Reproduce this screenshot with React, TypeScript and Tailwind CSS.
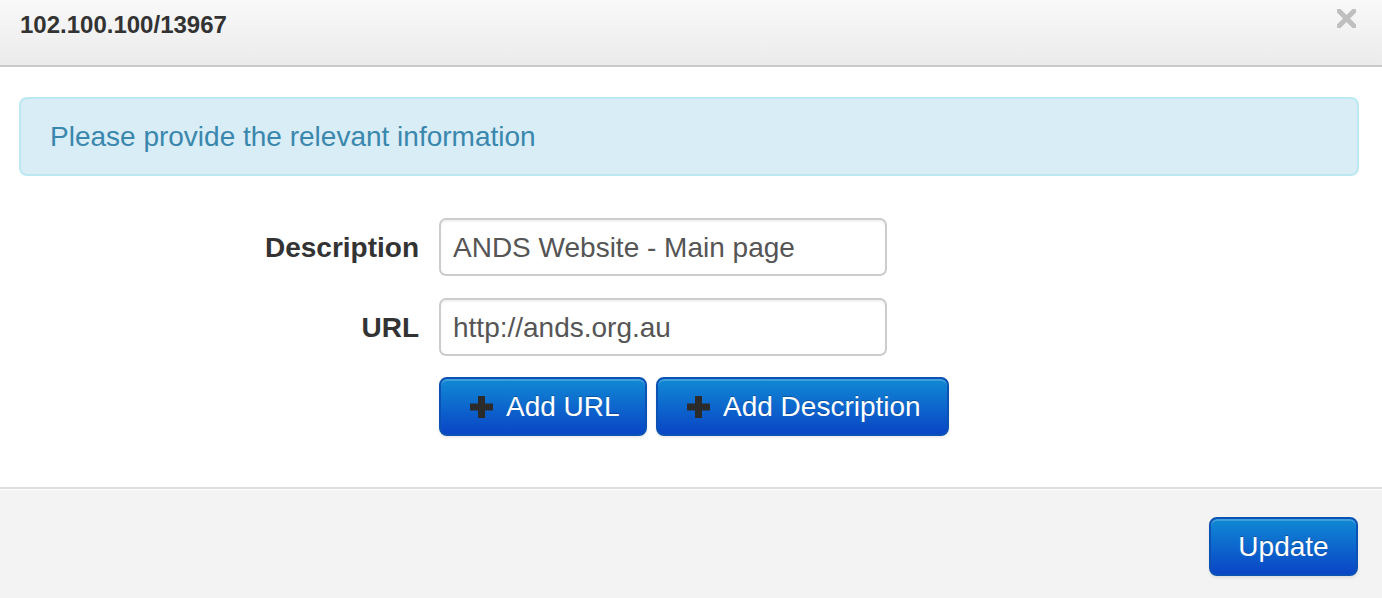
import React from "react";

function PlusIcon() {
  return (
    <svg width="23" height="22" viewBox="0 0 23 22" className="shrink-0">
      <rect x="0" y="7.5" width="23" height="7" fill="#2b2b2b" />
      <rect x="8" y="0" width="7" height="22" fill="#2b2b2b" />
    </svg>
  );
}

function CloseIcon() {
  return (
    <svg width="19" height="19" viewBox="0 0 19 19">
      <path d="M2 2 L17 17 M17 2 L2 17" stroke="#bfbfbf" strokeWidth="5" strokeLinecap="square" />
    </svg>
  );
}

const btn =
  "h-[59px] flex items-center rounded-[8px] border-2 border-[#0b52b4] bg-[linear-gradient(to_bottom,#1089d4,#0a45c6)] text-white text-[28px] leading-none shadow-[inset_0_2px_0_rgba(255,255,255,0.2),0_2px_3px_rgba(0,0,0,0.08)] [text-shadow:0_-1px_0_rgba(0,0,0,0.25)]";

const field =
  "w-[448px] h-[58px] rounded-[7px] border-2 border-[#cccccc] bg-white pl-[12px] pr-[10px] pt-[2px] text-[28px] text-[#555] outline-none shadow-[inset_0_2px_2px_rgba(0,0,0,0.06)] font-['Liberation_Sans',Arial,sans-serif]";

export default function App() {
  return (
    <div className="w-[1382px] h-[598px] flex flex-col bg-white overflow-hidden font-['Liberation_Sans',Arial,sans-serif]">
      <div className="h-[67px] shrink-0 flex items-start justify-between border-b-2 border-[#c9c9c9] bg-[linear-gradient(to_bottom,#f9f9f9,#ebebeb)] pl-[20px] pr-[26px] pt-[10px]">
        <h3 className="text-[24px] leading-[30px] font-bold text-[#333]">102.100.100/13967</h3>
        <div className="-mt-[1px]">
          <CloseIcon />
        </div>
      </div>

      <div className="h-[420px] shrink-0 pt-[30px] pl-[19px] pr-[23px]">
        <div className="h-[79px] flex items-center rounded-[8px] border-2 border-[#bce8f1] bg-[#d9edf7] pl-[29px] text-[28px] text-[#3a87ad]">
          Please provide the relevant information
        </div>

        <div className="mt-[42px] flex flex-col">
          <div className="flex items-center gap-[20px]">
            <label className="w-[400px] pt-[2px] text-right text-[28px] font-bold text-[#333]">Description</label>
            <input readOnly defaultValue="ANDS Website - Main page" className={field} />
          </div>
          <div className="mt-[22px] flex items-center gap-[20px]">
            <label className="w-[400px] pt-[2px] text-right text-[28px] font-bold text-[#333]">URL</label>
            <input readOnly defaultValue="http://ands.org.au" className={field} />
          </div>
          <div className="mt-[21px] ml-[420px] flex gap-[9px]">
            <button className={btn + " w-[208px] pl-[29px] gap-[13px]"}>
              <PlusIcon />
              <span>Add URL</span>
            </button>
            <button className={btn + " w-[293px] pl-[29px] gap-[13px]"}>
              <PlusIcon />
              <span>Add Description</span>
            </button>
          </div>
        </div>
      </div>

      <div className="flex-1 border-t-2 border-[#dddddd] bg-[#f3f3f3] shadow-[inset_0_1px_0_#ffffff] flex justify-end pt-[28px] pr-[24px]">
        <button className={btn + " w-[149px] justify-center"}>Update</button>
      </div>
    </div>
  );
}
